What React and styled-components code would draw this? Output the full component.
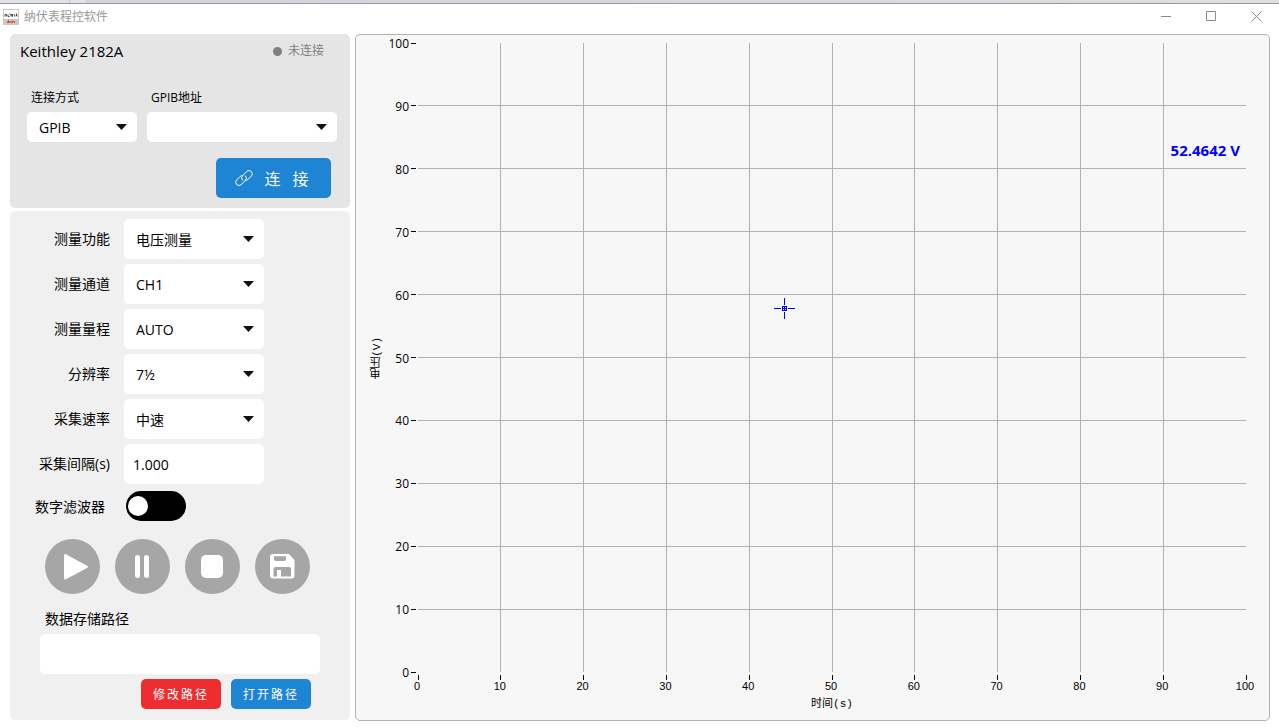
import React, { useState } from 'react';
import styled, { createGlobalStyle } from 'styled-components';

const uiFont = `'Open Sans', 'Noto Sans CJK SC', sans-serif`;
const plotFont = `'Liberation Sans', 'Noto Sans CJK SC', sans-serif`;
const axisFont = `'Liberation Mono', 'Noto Sans CJK SC', monospace`;

const settings = [
  { id: 'function', label: '测量功能', options: ['电压测量', '温度测量'] },
  { id: 'channel', label: '测量通道', options: ['CH1', 'CH2'] },
  { id: 'range', label: '测量量程', options: ['AUTO', '10mV', '100mV', '1V'] },
  { id: 'digits', label: '分辨率', options: ['7½', '6½', '5½', '4½'] },
  { id: 'rate', label: '采集速率', options: ['中速', '快速', '慢速'] },
];

const ticks = [0, 10, 20, 30, 40, 50, 60, 70, 80, 90, 100];

const SelectBox = ({ id, options, height }) => (
  <SelectWrap>
    <Select id={id} $height={height}>
      {options.map((option) => (
        <option key={option}>{option}</option>
      ))}
    </Select>
    <Arrow viewBox='0 0 11 6'>
      <path d='M0 0h11L5.500 6z' fill='#111' />
    </Arrow>
  </SelectWrap>
);

const TitleBar = () => (
  <TitleBarStyles>
    <svg width='16' height='16' viewBox='0 0 16 16'>
      <rect width='16' height='16' fill='#c8c8c8' />
      <rect x='1' y='1' width='14' height='9' fill='#fff' />
      <path
        d='M2 7.500V5.500h1.500v2M5 5.500v2h1.500M6.500 5h1M8 7.500V5l1.500 2.500V5M11 5l1 2.500M13 5h1l-1 1.500h1v1'
        fill='none'
        stroke='#222'
        strokeWidth='0.8'
      />
      <path
        d='M4 14l1.500-2.500v2.500l1.500-1.500 1 1 1-1.500v2l1-1.500h1.500v1.500'
        fill='none'
        stroke='#f03c14'
      />
    </svg>
    <h1>纳伏表程控软件</h1>
    <WindowButton aria-label='最小化'>
      <svg width='11' height='11'>
        <path d='M0 5.500h10' />
      </svg>
    </WindowButton>
    <WindowButton aria-label='最大化'>
      <svg width='11' height='11'>
        <path d='M0.500 0.500h9v9h-9z' />
      </svg>
    </WindowButton>
    <WindowButton aria-label='关闭'>
      <svg width='11' height='11'>
        <path d='M0.500 0.500l10 10M10.500 0.500l-10 10' />
      </svg>
    </WindowButton>
  </TitleBarStyles>
);

const Connection = () => (
  <ConnectionCard>
    <DeviceRow>
      <h2>Keithley 2182A</h2>
      <Status>未连接</Status>
    </DeviceRow>
    <PortRow>
      <Field>
        <label htmlFor='mode'>连接方式</label>
        <SelectBox id='mode' options={['GPIB', 'RS232']} height={30} />
      </Field>
      <Field>
        <label htmlFor='address'>GPIB地址</label>
        <SelectBox id='address' options={['']} height={30} />
      </Field>
    </PortRow>
    <ConnectButton>
      <svg width='20' height='20' viewBox='0 0 24 24'>
        <path d='M10 14.500a4 4 0 0 1 .5-5.500l5-5a3.900 3.900 0 0 1 5.500 5.500l-4.500 4.500a4 4 0 0 1-3 1' />
        <path d='M14 9.500a4 4 0 0 1-.5 5.500l-5 5a3.900 3.900 0 0 1-5.500-5.500l4.500-4.500a4 4 0 0 1 3-1' />
      </svg>
      连 接
    </ConnectButton>
  </ConnectionCard>
);

const Measurement = () => {
  const [interval, setInterval] = useState('1.000');
  const [filter, setFilter] = useState(false);
  const [path, setPath] = useState('');

  return (
    <MeasurementCard>
      <SettingsGrid>
        {settings.map(({ id, label, options }) => (
          <React.Fragment key={id}>
            <label htmlFor={id}>{label}</label>
            <SelectBox id={id} options={options} height={40} />
          </React.Fragment>
        ))}
        <label htmlFor='interval'>采集间隔(s)</label>
        <TextInput
          id='interval'
          value={interval}
          onChange={(e) => setInterval(e.target.value)}
        />
      </SettingsGrid>
      <FilterRow>
        <label htmlFor='filter'>数字滤波器</label>
        <Switch
          id='filter'
          type='checkbox'
          role='switch'
          checked={filter}
          onChange={() => setFilter(!filter)}
        />
      </FilterRow>
      <Controls>
        <RoundButton aria-label='开始'>
          <svg viewBox='0 0 55 55'>
            <path
              d='M20 16v23.500l22-11.700z'
              stroke='#fff'
              strokeWidth='2'
              strokeLinejoin='round'
            />
          </svg>
        </RoundButton>
        <RoundButton aria-label='暂停'>
          <svg viewBox='0 0 55 55'>
            <rect x='20' y='16' width='5' height='23' rx='2.500' />
            <rect x='29' y='16' width='5' height='23' rx='2.500' />
          </svg>
        </RoundButton>
        <RoundButton aria-label='停止'>
          <svg viewBox='0 0 55 55'>
            <rect x='16' y='16' width='22' height='23' rx='5' />
          </svg>
        </RoundButton>
        <RoundButton aria-label='保存'>
          <svg viewBox='0 0 55 55'>
            <path
              fillRule='evenodd'
              d='M18 15h16l5.500 6v15.500a3 3 0 0 1-3 3H18a3 3 0 0 1-3-3V18a3 3 0 0 1 3-3z
                M19 17.200v2.800a2 2 0 0 0 2 2h8a2 2 0 0 0 2-2v-2.800z
                M18.500 37.500v-7.500a2 2 0 0 1 2-2h13.500a2 2 0 0 1 2 2v7.500H26v-6.500h-4v6.500z'
            />
          </svg>
        </RoundButton>
      </Controls>
      <PathField>
        <label htmlFor='path'>数据存储路径</label>
        <TextInput
          id='path'
          value={path}
          onChange={(e) => setPath(e.target.value)}
        />
      </PathField>
      <PathActions>
        <SmallButton $color='#ed2d2f'>修改路径</SmallButton>
        <SmallButton $color='#1e84d4'>打开路径</SmallButton>
      </PathActions>
    </MeasurementCard>
  );
};

const Chart = () => (
  <ChartCard>
    <YTitle>电压(V)</YTitle>
    <Plot>
      {ticks.map((tick) => (
        <React.Fragment key={tick}>
          <svg x={`${tick}%`} y='100%'>
            <line className='tick' y1='3' y2='8' />
            <text className='xLabel' x='-1' y='18'>
              {tick}
            </text>
          </svg>
          <svg x='0' y={`${100 - tick}%`}>
            <line className='tick' x1='-7' x2='-2' />
            <text className='yLabel' x='-9' y='5'>
              {tick}
            </text>
          </svg>
          {tick > 0 && tick < 100 && (
            <>
              <line x1={`${tick}%`} x2={`${tick}%`} y1='0' y2='100%' />
              <line x1='0' x2='100%' y1={`${tick}%`} y2={`${tick}%`} />
            </>
          )}
        </React.Fragment>
      ))}
      <svg x='44.200%' y='42.100%'>
        <path
          className='cursor'
          d='M-10 0h7v1h-7zM4 0h7v1h-7zM0-10h1v7h-1zM0 4h1v7h-1z
            M-2-2h5v5h-5zM-1-1h1v1h-1zM1-1h1v1h-1zM-1 1h1v1h-1zM1 1h1v1h-1z'
        />
      </svg>
      <svg x='100%' y='17%'>
        <text className='reading' x='-6' y='6'>
          52.4642 V
        </text>
      </svg>
    </Plot>
    <XTitle>时间(s)</XTitle>
  </ChartCard>
);

const App = () => (
  <>
    <GlobalStyles />
    <Window>
      <TopEdge />
      <TitleBar />
      <Main>
        <Sidebar>
          <Connection />
          <Measurement />
        </Sidebar>
        <Chart />
      </Main>
    </Window>
  </>
);

const GlobalStyles = createGlobalStyle`
  * {
    box-sizing: border-box;
    margin: 0;
    padding: 0;
  }

  body {
    background: #fff;
    color: #000;
    font-family: ${uiFont};
    font-size: 14px;
  }

  button, input, select {
    border: none;
    outline: none;
    font-family: inherit;
    font-size: 14px;
    color: inherit;
  }
`;

const Window = styled.div`
  min-height: 100vh;
  display: flex;
  flex-direction: column;
`;

const TopEdge = styled.div`
  height: 3px;
  background: linear-gradient(
    90deg,
    #e0e3ea 69px,
    #c4c7cd 69px 70px,
    #e0e3ea 70px 86px,
    #d0d3d9 86px,
    #dddfe3
  );
`;

const TitleBarStyles = styled.header`
  display: flex;
  align-items: center;
  height: 28px;
  padding: 0 0 2px 3px;
  border-top: 1px solid #96989b;

  h1 {
    flex: 1;
    padding-left: 5px;
    font-size: 12px;
    line-height: 16px;
    font-weight: 400;
    color: #999;
  }
`;

const WindowButton = styled.button`
  width: 45px;
  height: 24px;
  display: flex;
  align-items: center;
  justify-content: center;
  background: none;

  path {
    fill: none;
    stroke: #8c8c8c;
  }
`;

const Main = styled.main`
  flex: 1;
  display: flex;
  gap: 5px;
  padding: 3px 9px 6px 10px;
`;

const Sidebar = styled.div`
  width: 340px;
  flex: none;
  display: flex;
  flex-direction: column;
  gap: 3px;
  padding-bottom: 1px;
`;

const ConnectionCard = styled.section`
  display: flex;
  flex-direction: column;
  padding: 7px 13px 10px 10px;
  border-radius: 5px;
  background: #e5e5e5;
`;

const DeviceRow = styled.div`
  display: flex;
  align-items: center;
  justify-content: space-between;
  padding-right: 13px;

  h2 {
    font-size: 15px;
    line-height: 20px;
    font-weight: 400;
  }
`;

const Status = styled.span`
  display: flex;
  align-items: center;
  gap: 6px;
  font-size: 12px;
  line-height: 20px;
  color: #808080;

  &::before {
    content: '';
    width: 9px;
    height: 9px;
    border-radius: 50%;
    background: #808080;
  }
`;

const PortRow = styled.div`
  display: grid;
  grid-template-columns: 110px 1fr;
  gap: 10px;
  padding: 27px 0 16px 7px;
`;

const Field = styled.div`
  display: flex;
  flex-direction: column;
  gap: 4px;

  label {
    padding-left: 4px;
    font-size: 12px;
    line-height: 20px;
  }
`;

const SelectWrap = styled.div`
  display: grid;
  align-items: center;
`;

const Select = styled.select`
  grid-area: 1 / 1;
  width: 100%;
  height: ${({ $height }) => $height}px;
  padding: 0 24px 0 12px;
  border-radius: 5px;
  appearance: none;
  background: #fff;
`;

const Arrow = styled.svg`
  grid-area: 1 / 1;
  justify-self: end;
  width: 11px;
  height: 6px;
  margin-right: 10px;
  pointer-events: none;
`;

const TextInput = styled.input`
  width: 100%;
  height: 40px;
  padding: 0 9px;
  border-radius: 5px;
  background: #fff;
`;

const ConnectButton = styled.button`
  align-self: flex-end;
  display: flex;
  align-items: center;
  justify-content: center;
  gap: 10px;
  width: 115px;
  height: 40px;
  margin-right: 6px;
  border-radius: 5px;
  background: #1e84d4;
  color: #fff;
  font-size: 16px;
  letter-spacing: 4px;

  path {
    fill: none;
    stroke: #fff;
    stroke-width: 1.2;
    stroke-linecap: round;
  }
`;

const MeasurementCard = styled.section`
  flex: 1;
  padding: 8px 14px 11px;
  border-radius: 5px;
  background: #f0f0f0;
`;

const SettingsGrid = styled.div`
  display: grid;
  grid-template-columns: 86px 140px;
  gap: 5px 14px;
  align-items: center;

  label {
    text-align: right;
    line-height: 20px;
  }
`;

const FilterRow = styled.div`
  display: flex;
  align-items: center;
  gap: 21px;
  padding: 7px 0 18px 11px;
`;

const Switch = styled.input`
  width: 60px;
  height: 30px;
  padding: 0 2px;
  display: flex;
  align-items: center;
  justify-content: ${({ checked }) => (checked ? 'flex-end' : 'flex-start')};
  border-radius: 15px;
  appearance: none;
  background: #000;

  &::before {
    content: '';
    width: 20px;
    height: 20px;
    border-radius: 50%;
    background: #fff;
  }
`;

const Controls = styled.div`
  display: flex;
  gap: 15px;
  padding-left: 21px;
`;

const RoundButton = styled.button`
  width: 55px;
  height: 55px;
  border-radius: 50%;
  background: #a6a6a6;

  svg {
    display: block;
    fill: #fff;
  }
`;

const PathField = styled.div`
  display: flex;
  flex-direction: column;
  gap: 5px;
  padding: 15px 16px 5px;

  label {
    padding-left: 5px;
    line-height: 20px;
  }
`;

const PathActions = styled.div`
  display: flex;
  justify-content: flex-end;
  gap: 10px;
  padding-right: 25px;
`;

const SmallButton = styled.button`
  width: 80px;
  height: 30px;
  border-radius: 5px;
  background: ${({ $color }) => $color};
  color: #fff;
  font-size: 12px;
  letter-spacing: 2px;
`;

const ChartCard = styled.section`
  flex: 1;
  display: grid;
  grid-template-columns: 14px 1fr;
  grid-template-rows: 1fr 16px;
  gap: 24px 34px;
  padding: 8px 23px 8px 14px;
  border: 1px solid #b2b2b2;
  border-radius: 5px;
  background: #f7f7f7;
  font-family: ${plotFont};
`;

const Plot = styled.svg`
  width: 100%;
  height: 100%;
  overflow: visible;

  svg {
    overflow: visible;
  }

  line {
    stroke: #b2b2b2;
    shape-rendering: crispEdges;
  }

  .tick {
    stroke: #000;
  }

  .xLabel {
    font-size: 11px;
    text-anchor: middle;
  }

  .yLabel {
    font-family: ${uiFont};
    font-size: 12px;
    text-anchor: end;
  }

  .cursor {
    fill: #00f;
    fill-rule: evenodd;
    shape-rendering: crispEdges;
  }

  .reading {
    font-family: ${uiFont};
    font-size: 15px;
    font-weight: 700;
    fill: #00f;
    text-anchor: end;
  }
`;

const YTitle = styled.span`
  align-self: center;
  writing-mode: vertical-rl;
  transform: rotate(180deg);
  font-family: ${axisFont};
  font-size: 11px;
  line-height: 14px;
`;

const XTitle = styled.span`
  grid-column: 2;
  text-align: center;
  font-family: ${axisFont};
  font-size: 11px;
  line-height: 16px;
`;

export default App;
